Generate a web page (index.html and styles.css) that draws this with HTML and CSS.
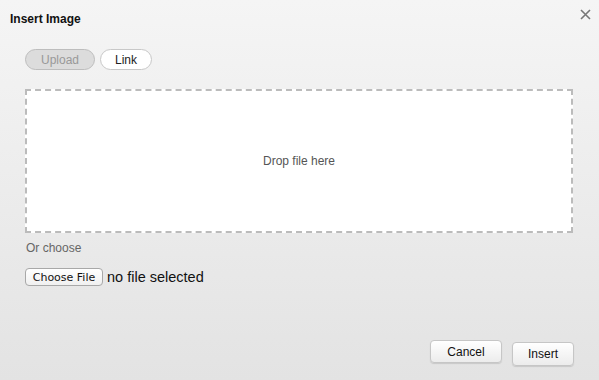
FILE: index.html
```
<!DOCTYPE html>
<html lang="en">
<head>
  <meta charset="UTF-8" />
  <title>Insert Image</title>
  <link rel="stylesheet" href="styles.css">
</head>
<body>
  <div class="dialog">
    <header class="dialog-header">
      <h1>Insert Image</h1>
      <button class="close-btn" aria-label="Close">
        <svg width="11" height="11" viewBox="0 0 11 11">
          <path d="M1 1 L10 10 M10 1 L1 10" stroke="#777" stroke-width="1.6" fill="none" />
        </svg>
      </button>
    </header>

    <div class="dialog-body">
      <div class="tabs">
        <button class="tab active">Upload</button>
        <button class="tab">Link</button>
      </div>

      <div class="dropzone">Drop file here</div>

      <p class="or-choose">Or choose</p>

      <div class="file-row">
        <label class="file-btn">Choose File</label>
        <span class="file-name">no file selected</span>
      </div>
    </div>

    <footer class="dialog-footer">
      <button class="btn cancel">Cancel</button>
      <button class="btn insert">Insert</button>
    </footer>
  </div>
</body>
</html>
```

FILE: styles.css
```
* {
  box-sizing: border-box;
}

body {
  margin: 0;
  font-family: 'Liberation Sans', Arial, sans-serif;
  color: #222;
}

.dialog {
  width: 599px;
  height: 380px;
  display: flex;
  flex-direction: column;
  background: linear-gradient(#f5f5f5, #e3e3e3);
}

.dialog-header {
  display: flex;
  justify-content: space-between;
  align-items: flex-start;
  padding: 12px 8px 0 10px;
}

.dialog-header h1 {
  margin: 0;
  font-size: 12px;
  line-height: 14px;
  font-weight: bold;
  color: #111;
}

.close-btn {
  background: none;
  border: none;
  padding: 0;
  margin: -3px 0 0;
  cursor: pointer;
  line-height: 0;
}

.dialog-body {
  padding: 0 26px 0 25px;
}

.tabs {
  display: flex;
  gap: 5px;
  margin-top: 23px;
}

.tab {
  height: 21px;
  padding: 0 14px;
  border: 1px solid #c8c8c8;
  border-radius: 11px;
  background: #fff;
  font-family: inherit;
  font-size: 12px;
  color: #222;
}

.tab.active {
  width: 70px;
  background: #dcdcdc;
  border-color: #bdbdbd;
  color: #999;
}

.dropzone {
  margin-top: 19px;
  height: 144px;
  border: 2px dashed #bbb;
  background: #fff;
  display: flex;
  align-items: center;
  justify-content: center;
  font-size: 12px;
  color: #555;
}

.or-choose {
  margin: 8px 0 0 1px;
  font-size: 12px;
  line-height: 15px;
  color: #666;
}

.file-row {
  display: flex;
  align-items: center;
  gap: 4px;
  margin-top: 12px;
}

.file-btn {
  height: 18px;
  width: 78px;
  justify-content: center;
  display: flex;
  align-items: center;
  border: 1px solid #a8a8a8;
  border-radius: 4px;
  background: linear-gradient(#fff, #f0f0f0);
  font-family: 'DejaVu Sans', sans-serif;
  font-size: 11px;
  color: #111;
}

.file-name {
  font-size: 14.5px;
  color: #111;
}

.dialog-footer {
  margin-top: auto;
  display: flex;
  justify-content: flex-end;
  align-items: flex-start;
  gap: 10px;
  padding: 0 25px 14px 0;
}

.btn {
  height: 23px;
  padding: 0;
  border: 1px solid #c6c6c6;
  border-radius: 4px;
  background: linear-gradient(#fff, #ececec);
  box-shadow: 0 1px 1px rgba(0, 0, 0, 0.12);
  font-family: inherit;
  font-size: 12px;
  color: #111;
}

.btn.cancel {
  width: 72px;
}

.btn.insert {
  margin-top: 2px;
  height: 24px;
  width: 62px;
}
```
